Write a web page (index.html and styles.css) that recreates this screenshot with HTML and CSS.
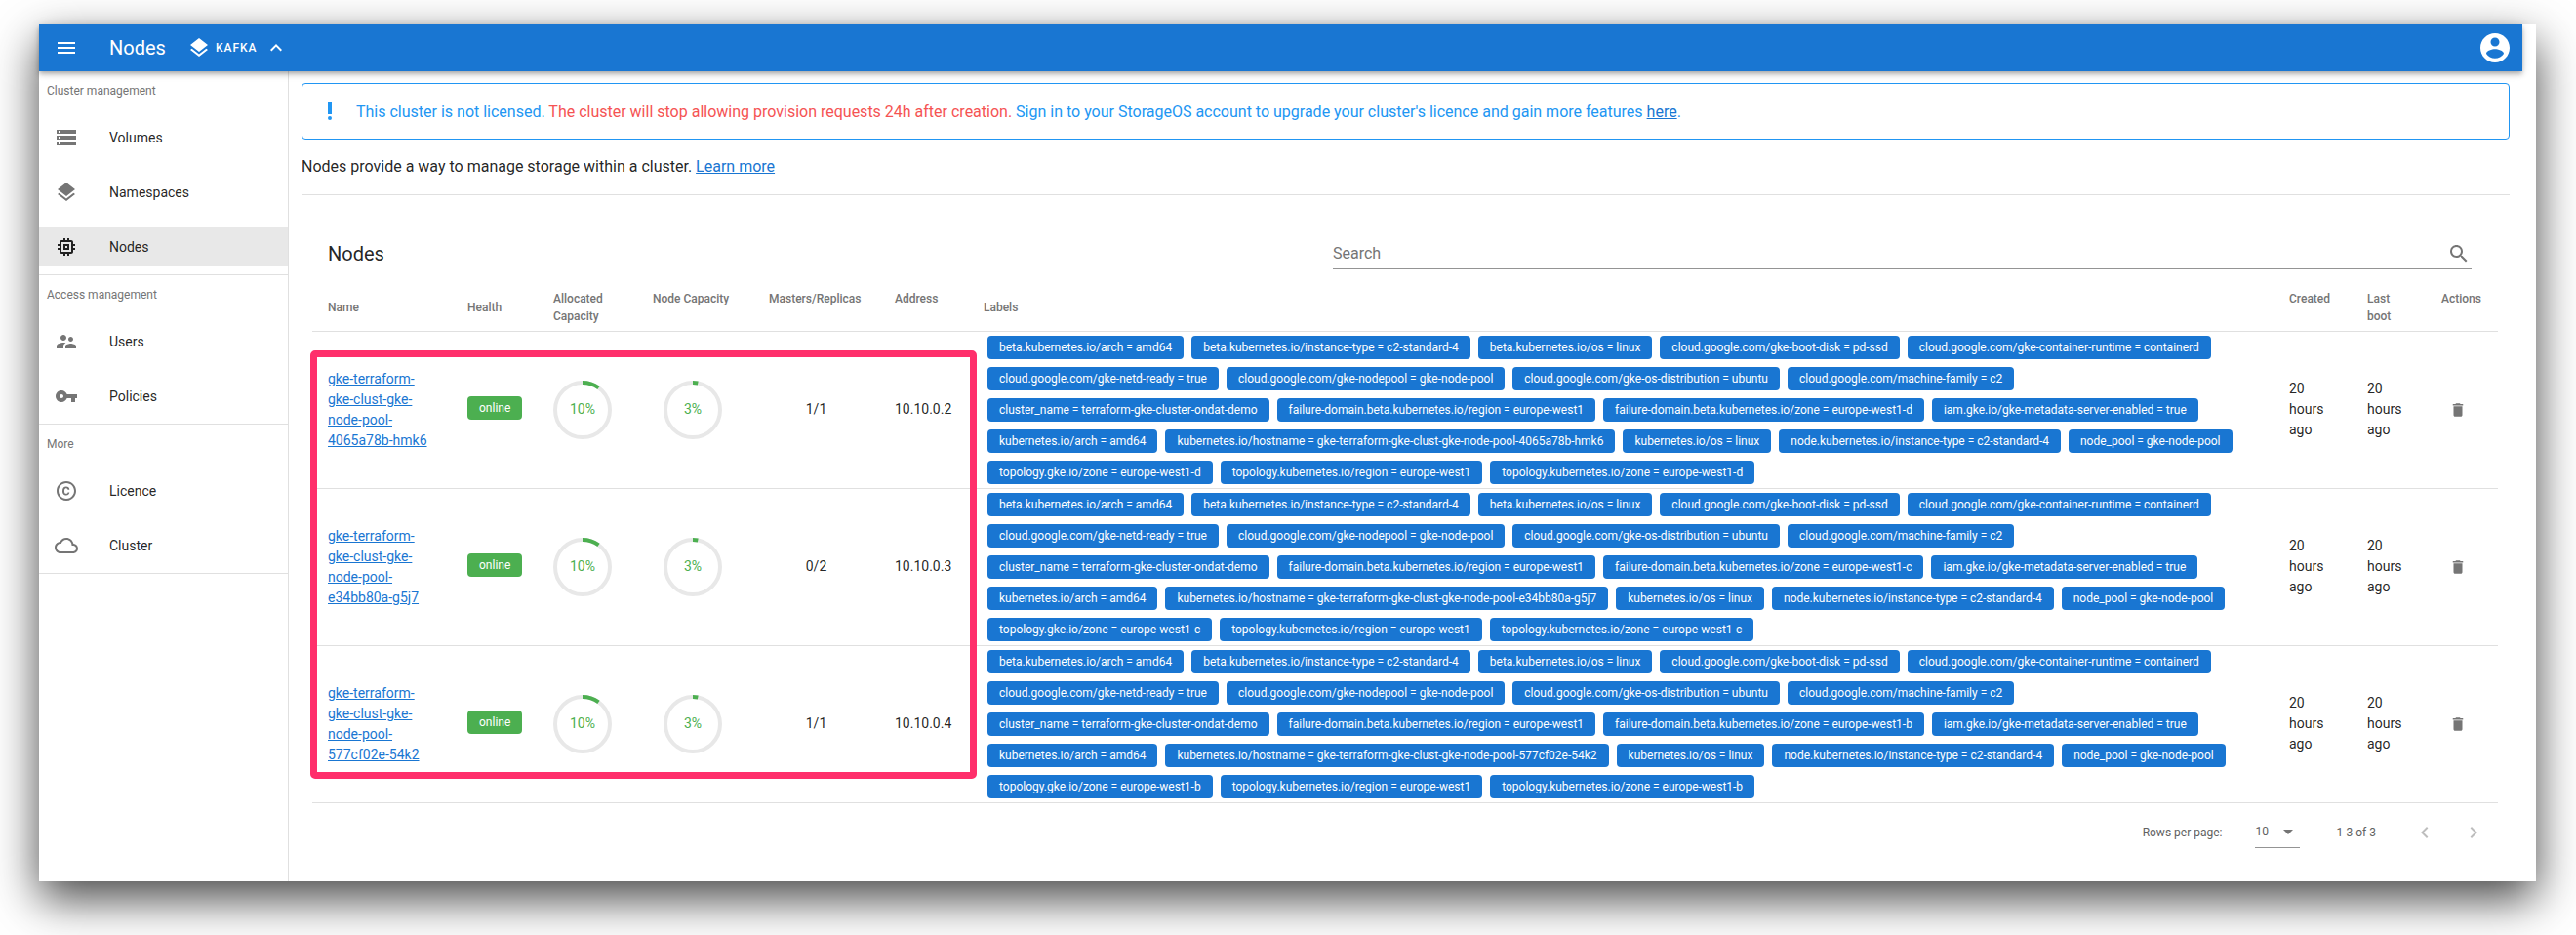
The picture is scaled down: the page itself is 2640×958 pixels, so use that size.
FILE: index.html

```html
<!DOCTYPE html>
<html lang="en">
<head>
    <meta charset="UTF-8">
    <meta name="viewport" content="width=device-width, initial-scale=1.0">
    <title>Nodes</title>
    <link rel="stylesheet" href="styles.css">
</head>
<body>
    <svg class="sprite" aria-hidden="true">
        <symbol id="i-layers" viewBox="0 0 24 24"><path d="M11.99 18.54l-7.37-5.73L3 14.07l9 7 9-7-1.63-1.27-7.38 5.74zM12 16l7.36-5.73L21 9l-9-7-9 7 1.63 1.27L12 16z"/></symbol>
        <symbol id="i-delete" viewBox="0 0 24 24"><path d="M6 19c0 1.1.9 2 2 2h8c1.1 0 2-.9 2-2V7H6v12zM19 4h-3.5l-1-1h-5l-1 1H5v2h14V4z"/></symbol>
        <symbol id="ring-10" viewBox="0 0 60 60"><circle class="ring-track" cx="30" cy="30" r="28"/><circle class="ring-value" cx="30" cy="30" r="28" stroke-dasharray="17.6 176"/></symbol>
        <symbol id="ring-3" viewBox="0 0 60 60"><circle class="ring-track" cx="30" cy="30" r="28"/><circle class="ring-value" cx="30" cy="30" r="28" stroke-dasharray="5.3 176"/></symbol>
    </svg>

    <div class="window">
        <header class="topbar">
            <svg class="icon menu-icon" viewBox="0 0 24 24"><path d="M3 18h18v-2H3v2zm0-5h18v-2H3v2zm0-7v2h18V6H3z"/></svg>
            <h1 class="page-title">Nodes</h1>
            <svg class="icon ns-icon"><use href="#i-layers"/></svg>
            <span class="ns-name">KAFKA</span>
            <svg class="icon ns-toggle" viewBox="0 0 24 24"><path d="M12 8l-6 6 1.41 1.41L12 10.83l4.59 4.58L18 14z"/></svg>
            <svg class="account-icon" viewBox="0 0 24 24"><path d="M12 2C6.48 2 2 6.48 2 12s4.48 10 10 10 10-4.48 10-10S17.52 2 12 2zm0 3c1.66 0 3 1.34 3 3s-1.34 3-3 3-3-1.34-3-3 1.34-3 3-3zm0 14.2c-2.5 0-4.71-1.28-6-3.22.03-1.99 4-3.08 6-3.08 1.99 0 5.97 1.09 6 3.08-1.29 1.94-3.5 3.22-6 3.22z"/></svg>
        </header>

        <div class="layout">
            <nav class="sidebar">
                <section class="nav-group">
                    <div class="nav-title">Cluster management</div>
                    <a class="nav-item">
                        <svg class="icon" viewBox="0 0 24 24"><path d="M2 20h20v-4H2v4zm2-3h2v2H4v-2zM2 4v4h20V4H2zm4 3H4V5h2v2zm-4 7h20v-4H2v4zm2-3h2v2H4v-2z"/></svg>
                        <span>Volumes</span>
                    </a>
                    <a class="nav-item">
                        <svg class="icon"><use href="#i-layers"/></svg>
                        <span>Namespaces</span>
                    </a>
                    <a class="nav-item active">
                        <svg class="icon" viewBox="0 0 24 24"><path d="M15 9H9v6h6V9zm-2 4h-2v-2h2v2zm8-2V9h-2V7c0-1.1-.9-2-2-2h-2V3h-2v2h-2V3H9v2H7c-1.1 0-2 .9-2 2v2H3v2h2v2H3v2h2v2c0 1.1.9 2 2 2h2v2h2v-2h2v2h2v-2h2c1.1 0 2-.9 2-2v-2h2v-2h-2v-2h2zm-4 6H7V7h10v10z"/></svg>
                        <span>Nodes</span>
                    </a>
                </section>
                <section class="nav-group">
                    <div class="nav-title">Access management</div>
                    <a class="nav-item">
                        <svg class="icon" viewBox="0 0 24 24"><path d="M16.5 12c1.38 0 2.49-1.12 2.49-2.5S17.88 7 16.5 7C15.12 7 14 8.12 14 9.5s1.12 2.5 2.5 2.5zM9 11c1.66 0 2.99-1.34 2.99-3S10.66 5 9 5C7.34 5 6 6.34 6 8s1.34 3 3 3zm7.5 3c-1.83 0-5.5.92-5.5 2.75V19h11v-2.25c0-1.83-3.67-2.75-5.5-2.75zM9 13c-2.33 0-7 1.17-7 3.5V19h7v-2.25c0-.85.33-2.34 2.37-3.47C10.5 13.1 9.66 13 9 13z"/></svg>
                        <span>Users</span>
                    </a>
                    <a class="nav-item">
                        <svg class="icon" viewBox="0 0 24 24"><path d="M12.65 10C11.83 7.67 9.61 6 7 6c-3.31 0-6 2.69-6 6s2.69 6 6 6c2.61 0 4.83-1.67 5.65-4H17v4h4v-4h2v-4H12.65zM7 14c-1.1 0-2-.9-2-2s.9-2 2-2 2 .9 2 2-.9 2-2 2z"/></svg>
                        <span>Policies</span>
                    </a>
                </section>
                <section class="nav-group">
                    <div class="nav-title">More</div>
                    <a class="nav-item">
                        <svg class="icon" viewBox="0 0 24 24"><path d="M11.88 9.14c1.28.06 1.61 1.15 1.63 1.66h1.79c-.08-1.98-1.49-3.19-3.45-3.19C9.64 7.61 8 9 8 12.14c0 1.94.93 4.24 3.84 4.24 2.22 0 3.41-1.65 3.44-2.95h-1.79c-.03.59-.45 1.38-1.63 1.44-1.31-.04-1.86-1.06-1.86-2.73 0-2.89 1.28-2.98 1.88-3zM12 2C6.48 2 2 6.48 2 12s4.48 10 10 10 10-4.48 10-10S17.52 2 12 2zm0 18c-4.41 0-8-3.59-8-8s3.59-8 8-8 8 3.59 8 8-3.59 8-8 8z"/></svg>
                        <span>Licence</span>
                    </a>
                    <a class="nav-item">
                        <svg class="icon" viewBox="0 0 24 24"><path d="M19.35 10.04C18.67 6.59 15.64 4 12 4 9.11 4 6.6 5.64 5.35 8.04 2.34 8.36 0 10.91 0 14c0 3.31 2.69 6 6 6h13c2.76 0 5-2.24 5-5 0-2.64-2.05-4.78-4.65-4.96zM19 18H6c-2.21 0-4-1.79-4-4s1.79-4 4-4h.71C7.37 7.69 9.48 6 12 6c3.04 0 5.5 2.46 5.5 5.5v.5H19c1.66 0 3 1.34 3 3s-1.34 3-3 3z"/></svg>
                        <span>Cluster</span>
                    </a>
                </section>
            </nav>

            <main class="content">
                <div class="licence-alert">
                    <svg class="icon alert-icon" viewBox="0 0 24 24"><circle cx="12" cy="19" r="2"/><path d="M10 3h4v12h-4z"/></svg>
                    <p>This cluster is not licensed. <span class="alert-warn">The cluster will stop allowing provision requests 24h after creation.</span> Sign in to your StorageOS account to upgrade your cluster's licence and gain more features <a href="#">here</a>.</p>
                </div>
                <p class="intro">Nodes provide a way to manage storage within a cluster. <a href="#">Learn more</a></p>

                <div class="nodes-card">
                    <div class="toolbar">
                        <h2>Nodes</h2>
                        <div class="search">
                            <span>Search</span>
                            <svg class="icon" viewBox="0 0 24 24"><path d="M15.5 14h-.79l-.28-.27C15.41 12.59 16 11.11 16 9.5 16 5.91 13.09 3 9.5 3S3 5.91 3 9.5 5.91 16 9.5 16c1.61 0 3.09-.59 4.23-1.57l.27.28v.79l5 4.99L20.49 19l-4.99-5zm-6 0C7.01 14 5 11.99 5 9.5S7.01 5 9.5 5 14 7.01 14 9.5 11.99 14 9.5 14z"/></svg>
                        </div>
                    </div>

                    <div class="table-wrap">
                        <table class="nodes-table">
                            <colgroup>
                                <col class="col-name">
                                <col class="col-health">
                                <col class="col-alloc">
                                <col class="col-cap">
                                <col class="col-masters">
                                <col class="col-address">
                                <col class="col-labels">
                                <col class="col-created">
                                <col class="col-boot">
                                <col class="col-actions">
                            </colgroup>
                            <thead>
                                <tr>
                                    <th>Name</th>
                                    <th>Health</th>
                                    <th class="th-top">Allocated Capacity</th>
                                    <th class="th-top">Node Capacity</th>
                                    <th class="th-top">Masters/Replicas</th>
                                    <th class="th-top">Address</th>
                                    <th>Labels</th>
                                    <th class="th-top">Created</th>
                                    <th class="th-top">Last boot</th>
                                    <th class="th-top">Actions</th>
                                </tr>
                            </thead>
                            <tbody>
                                <tr>
                                    <td><a href="#">gke-terraform-gke-clust-gke-node-pool-4065a78b-hmk6</a></td>
                                    <td><span class="status">online</span></td>
                                    <td><div class="ring"><svg><use href="#ring-10"/></svg><span>10%</span></div></td>
                                    <td class="cell-cap"><div class="ring"><svg><use href="#ring-3"/></svg><span>3%</span></div></td>
                                    <td class="cell-center">1/1</td>
                                    <td>10.10.0.2</td>
                                    <td class="cell-labels">
                                        <div class="labels">
                                            <span class="label">beta.kubernetes.io/arch = amd64</span>
                                            <span class="label">beta.kubernetes.io/instance-type = c2-standard-4</span>
                                            <span class="label">beta.kubernetes.io/os = linux</span>
                                            <span class="label">cloud.google.com/gke-boot-disk = pd-ssd</span>
                                            <span class="label">cloud.google.com/gke-container-runtime = containerd</span>
                                            <span class="label">cloud.google.com/gke-netd-ready = true</span>
                                            <span class="label">cloud.google.com/gke-nodepool = gke-node-pool</span>
                                            <span class="label">cloud.google.com/gke-os-distribution = ubuntu</span>
                                            <span class="label">cloud.google.com/machine-family = c2</span>
                                            <span class="label">cluster_name = terraform-gke-cluster-ondat-demo</span>
                                            <span class="label">failure-domain.beta.kubernetes.io/region = europe-west1</span>
                                            <span class="label">failure-domain.beta.kubernetes.io/zone = europe-west1-d</span>
                                            <span class="label">iam.gke.io/gke-metadata-server-enabled = true</span>
                                            <span class="label">kubernetes.io/arch = amd64</span>
                                            <span class="label">kubernetes.io/hostname = gke-terraform-gke-clust-gke-node-pool-4065a78b-hmk6</span>
                                            <span class="label">kubernetes.io/os = linux</span>
                                            <span class="label">node.kubernetes.io/instance-type = c2-standard-4</span>
                                            <span class="label">node_pool = gke-node-pool</span>
                                            <span class="label">topology.gke.io/zone = europe-west1-d</span>
                                            <span class="label">topology.kubernetes.io/region = europe-west1</span>
                                            <span class="label">topology.kubernetes.io/zone = europe-west1-d</span>
                                        </div>
                                    </td>
                                    <td>20 hours ago</td>
                                    <td>20 hours ago</td>
                                    <td class="cell-action"><svg class="icon"><use href="#i-delete"/></svg></td>
                                </tr>
                                <tr>
                                    <td><a href="#">gke-terraform-gke-clust-gke-node-pool-e34bb80a-g5j7</a></td>
                                    <td><span class="status">online</span></td>
                                    <td><div class="ring"><svg><use href="#ring-10"/></svg><span>10%</span></div></td>
                                    <td class="cell-cap"><div class="ring"><svg><use href="#ring-3"/></svg><span>3%</span></div></td>
                                    <td class="cell-center">0/2</td>
                                    <td>10.10.0.3</td>
                                    <td class="cell-labels">
                                        <div class="labels">
                                            <span class="label">beta.kubernetes.io/arch = amd64</span>
                                            <span class="label">beta.kubernetes.io/instance-type = c2-standard-4</span>
                                            <span class="label">beta.kubernetes.io/os = linux</span>
                                            <span class="label">cloud.google.com/gke-boot-disk = pd-ssd</span>
                                            <span class="label">cloud.google.com/gke-container-runtime = containerd</span>
                                            <span class="label">cloud.google.com/gke-netd-ready = true</span>
                                            <span class="label">cloud.google.com/gke-nodepool = gke-node-pool</span>
                                            <span class="label">cloud.google.com/gke-os-distribution = ubuntu</span>
                                            <span class="label">cloud.google.com/machine-family = c2</span>
                                            <span class="label">cluster_name = terraform-gke-cluster-ondat-demo</span>
                                            <span class="label">failure-domain.beta.kubernetes.io/region = europe-west1</span>
                                            <span class="label">failure-domain.beta.kubernetes.io/zone = europe-west1-c</span>
                                            <span class="label">iam.gke.io/gke-metadata-server-enabled = true</span>
                                            <span class="label">kubernetes.io/arch = amd64</span>
                                            <span class="label">kubernetes.io/hostname = gke-terraform-gke-clust-gke-node-pool-e34bb80a-g5j7</span>
                                            <span class="label">kubernetes.io/os = linux</span>
                                            <span class="label">node.kubernetes.io/instance-type = c2-standard-4</span>
                                            <span class="label">node_pool = gke-node-pool</span>
                                            <span class="label">topology.gke.io/zone = europe-west1-c</span>
                                            <span class="label">topology.kubernetes.io/region = europe-west1</span>
                                            <span class="label">topology.kubernetes.io/zone = europe-west1-c</span>
                                        </div>
                                    </td>
                                    <td>20 hours ago</td>
                                    <td>20 hours ago</td>
                                    <td class="cell-action"><svg class="icon"><use href="#i-delete"/></svg></td>
                                </tr>
                                <tr>
                                    <td><a href="#">gke-terraform-gke-clust-gke-node-pool-577cf02e-54k2</a></td>
                                    <td><span class="status">online</span></td>
                                    <td><div class="ring"><svg><use href="#ring-10"/></svg><span>10%</span></div></td>
                                    <td class="cell-cap"><div class="ring"><svg><use href="#ring-3"/></svg><span>3%</span></div></td>
                                    <td class="cell-center">1/1</td>
                                    <td>10.10.0.4</td>
                                    <td class="cell-labels">
                                        <div class="labels">
                                            <span class="label">beta.kubernetes.io/arch = amd64</span>
                                            <span class="label">beta.kubernetes.io/instance-type = c2-standard-4</span>
                                            <span class="label">beta.kubernetes.io/os = linux</span>
                                            <span class="label">cloud.google.com/gke-boot-disk = pd-ssd</span>
                                            <span class="label">cloud.google.com/gke-container-runtime = containerd</span>
                                            <span class="label">cloud.google.com/gke-netd-ready = true</span>
                                            <span class="label">cloud.google.com/gke-nodepool = gke-node-pool</span>
                                            <span class="label">cloud.google.com/gke-os-distribution = ubuntu</span>
                                            <span class="label">cloud.google.com/machine-family = c2</span>
                                            <span class="label">cluster_name = terraform-gke-cluster-ondat-demo</span>
                                            <span class="label">failure-domain.beta.kubernetes.io/region = europe-west1</span>
                                            <span class="label">failure-domain.beta.kubernetes.io/zone = europe-west1-b</span>
                                            <span class="label">iam.gke.io/gke-metadata-server-enabled = true</span>
                                            <span class="label">kubernetes.io/arch = amd64</span>
                                            <span class="label">kubernetes.io/hostname = gke-terraform-gke-clust-gke-node-pool-577cf02e-54k2</span>
                                            <span class="label">kubernetes.io/os = linux</span>
                                            <span class="label">node.kubernetes.io/instance-type = c2-standard-4</span>
                                            <span class="label">node_pool = gke-node-pool</span>
                                            <span class="label">topology.gke.io/zone = europe-west1-b</span>
                                            <span class="label">topology.kubernetes.io/region = europe-west1</span>
                                            <span class="label">topology.kubernetes.io/zone = europe-west1-b</span>
                                        </div>
                                    </td>
                                    <td>20 hours ago</td>
                                    <td>20 hours ago</td>
                                    <td class="cell-action"><svg class="icon"><use href="#i-delete"/></svg></td>
                                </tr>
                            </tbody>
                        </table>
                        <div class="highlight-box"></div>
                    </div>

                    <div class="pagination">
                        <span class="rows-label">Rows per page:</span>
                        <div class="rows-select">
                            <span>10</span>
                            <svg class="icon" viewBox="0 0 24 24"><path d="M7 10l5 5 5-5z"/></svg>
                        </div>
                        <span class="page-range">1-3 of 3</span>
                        <svg class="icon page-btn" viewBox="0 0 24 24"><path d="M15.41 7.41L14 6l-6 6 6 6 1.41-1.41L10.83 12z"/></svg>
                        <svg class="icon page-btn" viewBox="0 0 24 24"><path d="M10 6L8.59 7.41 13.17 12l-4.58 4.59L10 18l6-6z"/></svg>
                    </div>
                </div>
            </main>
        </div>
    </div>
</body>
</html>
```

FILE: styles.css

```css
body {
    font-family: Roboto, "Liberation Sans", sans-serif;
    background-color: #fff;
    color: rgba(0, 0, 0, 0.87);
    margin: 0;
    height: 958px;
    overflow: hidden;
}

a {
    color: #1976d2;
}

.sprite {
    display: none;
}

.icon {
    width: 24px;
    height: 24px;
    fill: #757575;
    flex: none;
}

.window {
    width: 2559px;
    height: 878px;
    margin: 25px 0 0 40px;
    position: absolute;
    background: white;
    box-shadow: 0 18px 44px rgba(0, 0, 0, 0.72);
    display: flex;
    flex-direction: column;
}

/* top bar */
.topbar {
    width: 2545px;
    height: 48px;
    flex: none;
    box-sizing: border-box;
    padding: 0 10px 0 16px;
    display: flex;
    align-items: center;
    background-color: #1976d2;
    box-shadow: 0 2px 4px -1px rgba(0, 0, 0, 0.2), 0 4px 5px rgba(0, 0, 0, 0.14), 0 1px 10px rgba(0, 0, 0, 0.12);
    color: white;
    position: relative;
    z-index: 2;
}

.topbar .icon {
    fill: white;
}

.menu-icon {
    margin-right: 32px;
}

.page-title {
    font-size: 20px;
    font-weight: 400;
    margin: 0 22px 0 0;
}

.ns-name {
    font-size: 12px;
    font-weight: 500;
    letter-spacing: 1px;
    margin: 0 7px 0 5px;
}

.account-icon {
    width: 36px;
    height: 36px;
    fill: white;
    margin-left: auto;
}

/* sidebar */
.layout {
    flex: 1;
    display: flex;
    min-height: 0;
}

.sidebar {
    width: 256px;
    flex: none;
    box-sizing: border-box;
    border-right: 1px solid #e0e0e0;
}

.nav-group {
    display: flex;
    flex-direction: column;
    gap: 16px;
    padding-bottom: 8px;
    border-bottom: 1px solid #e0e0e0;
}

.nav-title {
    height: 40px;
    line-height: 40px;
    margin-bottom: -8px;
    padding-left: 8px;
    font-size: 12px;
    color: #757575;
}

.nav-item {
    height: 40px;
    display: flex;
    align-items: center;
    padding-left: 16px;
    font-size: 14px;
    color: rgba(0, 0, 0, 0.87);
}

.nav-item .icon {
    margin-right: 32px;
}

.nav-item.active {
    background-color: #e8e8e8;
}

.nav-item.active .icon {
    fill: #212121;
}

/* main */
.content {
    flex: 1;
    min-width: 0;
    padding: 12px 13px 0 13px;
    margin-right: 14px;
}

.licence-alert {
    height: 58px;
    box-sizing: border-box;
    display: flex;
    align-items: center;
    gap: 15px;
    padding-left: 16px;
    border: 1px solid #2196f3;
    border-radius: 4px;
    color: #2196f3;
}

.licence-alert p {
    margin: 0;
    font-size: 16px;
}

.alert-icon {
    fill: #2196f3;
}

.alert-warn {
    color: #f55353;
}

.intro {
    margin: 0;
    padding: 18px 0 19px;
    height: 19px;
    line-height: 19px;
    font-size: 16px;
    border-bottom: 1px solid #e0e0e0;
}

.nodes-card {
    margin: 28px 12px 0 11px;
}

.toolbar {
    height: 64px;
    display: flex;
    align-items: center;
    justify-content: space-between;
    padding: 0 27px 0 16px;
}

.toolbar h2 {
    font-size: 20px;
    font-weight: 400;
    margin: 0;
}

.search {
    width: 1167px;
    height: 32px;
    box-sizing: border-box;
    display: flex;
    align-items: center;
    justify-content: space-between;
    padding-right: 1px;
    border-bottom: 1px solid #949494;
    font-size: 16px;
    color: #757575;
}

/* table */
.table-wrap {
    position: relative;
}

.nodes-table {
    width: 2240px;
    table-layout: fixed;
    border-collapse: collapse;
    font-size: 14px;
    line-height: 21px;
}

.col-name { width: 143px; }
.col-health { width: 88px; }
.col-alloc { width: 102px; }
.col-cap { width: 119px; }
.col-masters { width: 129px; }
.col-address { width: 91px; }
.col-labels { width: 1338px; }
.col-created { width: 80px; }
.col-boot { width: 76px; }
.col-actions { width: 74px; }

.nodes-table th {
    height: 47px;
    box-sizing: border-box;
    padding: 0 16px;
    font-size: 12px;
    font-weight: 500;
    line-height: 18px;
    text-align: left;
    color: #757575;
    border-bottom: 1px solid #e0e0e0;
}

.nodes-table .th-top {
    vertical-align: top;
    padding-top: 5px;
}

.nodes-table td {
    padding: 0 16px;
    border-bottom: 1px solid #e0e0e0;
}

.nodes-table .cell-cap {
    padding-left: 27px;
    padding-right: 0;
}

.nodes-table .cell-action {
    padding: 0 0 0 24px;
}

.cell-action .icon {
    display: block;
    width: 18px;
    height: 18px;
}

.cell-center {
    text-align: center;
}

.status {
    display: block;
    width: fit-content;
    height: 24px;
    line-height: 24px;
    margin-bottom: 3px;
    padding: 0 12px;
    border-radius: 4px;
    background-color: #4caf50;
    color: white;
    font-size: 12px;
}

.ring {
    width: 60px;
    height: 60px;
    display: grid;
    place-items: center;
    color: #4caf50;
}

.ring svg,
.ring span {
    grid-area: 1 / 1;
}

.ring svg {
    width: 60px;
    height: 60px;
    transform: rotate(-90deg);
}

.ring-track,
.ring-value {
    fill: none;
    stroke-width: 4;
}

.ring-track {
    stroke: #e8e8e8;
}

.ring-value {
    stroke: #4caf50;
}

.labels {
    display: flex;
    flex-wrap: wrap;
}

.label {
    height: 24px;
    line-height: 24px;
    margin: 4px;
    padding: 0 12px;
    border-radius: 4px;
    background-color: #1976d2;
    color: white;
    font-size: 12px;
    white-space: nowrap;
}

.highlight-box {
    position: absolute;
    left: -2px;
    top: 67px;
    width: 683px;
    height: 439px;
    box-sizing: border-box;
    border: 7px solid #ff2f6b;
    border-radius: 5px;
    pointer-events: none;
}

/* pagination */
.pagination {
    height: 60px;
    display: flex;
    align-items: center;
    justify-content: flex-end;
    padding-right: 13px;
    font-size: 12px;
    color: #616161;
}

.rows-select {
    width: 46px;
    height: 33px;
    box-sizing: border-box;
    display: flex;
    align-items: center;
    justify-content: space-between;
    margin: 0 37px 0 34px;
    border-bottom: 1px solid #949494;
}

.page-range {
    margin-right: 38px;
}

.page-btn {
    fill: #bdbdbd;
}

.page-btn + .page-btn {
    margin-left: 26px;
}
```
